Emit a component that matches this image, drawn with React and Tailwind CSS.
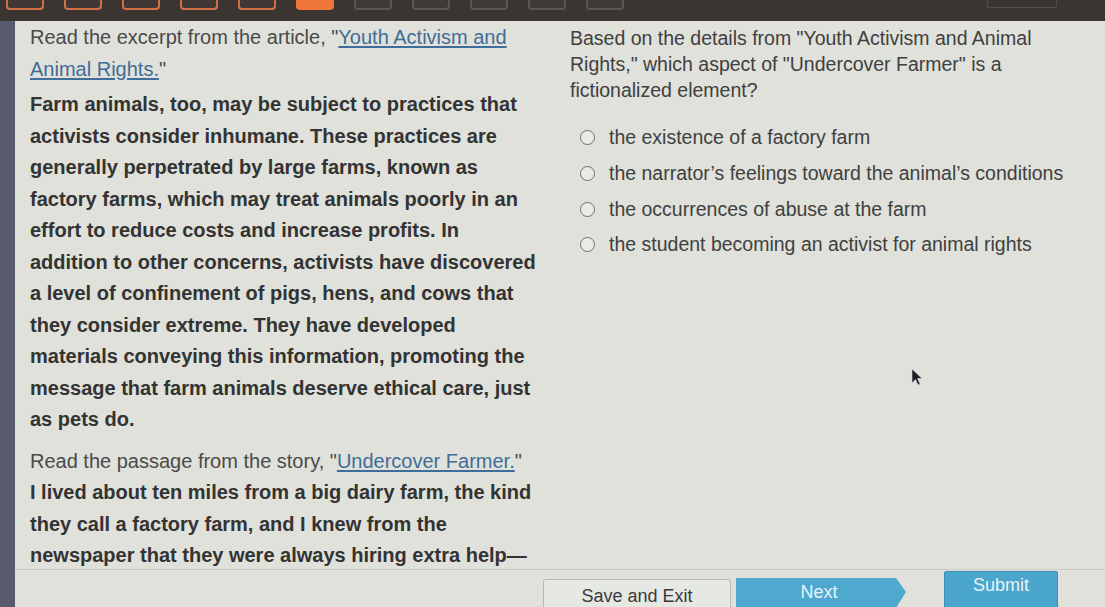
import { Fragment } from "react";

const tabs = [
  { state: "done" },
  { state: "done" },
  { state: "done" },
  { state: "done" },
  { state: "done" },
  { state: "current" },
  { state: "todo" },
  { state: "todo" },
  { state: "todo" },
  { state: "todo" },
  { state: "todo" },
];

const passageLines = [
  "Farm animals, too, may be subject to practices that",
  "activists consider inhumane. These practices are",
  "generally perpetrated by large farms, known as",
  "factory farms, which may treat animals poorly in an",
  "effort to reduce costs and increase profits. In",
  "addition to other concerns, activists have discovered",
  "a level of confinement of pigs, hens, and cows that",
  "they consider extreme. They have developed",
  "materials conveying this information, promoting the",
  "message that farm animals deserve ethical care, just",
  "as pets do.",
];

const storyLines = [
  "I lived about ten miles from a big dairy farm, the kind",
  "they call a factory farm, and I knew from the",
  "newspaper that they were always hiring extra help\u2014",
];

const options = [
  "the existence of a factory farm",
  "the narrator\u2019s feelings toward the animal\u2019s conditions",
  "the occurrences of abuse at the farm",
  "the student becoming an activist for animal rights",
];

function Lines({ lines }) {
  return lines.map((l, i) => (
    <Fragment key={i}>
      {l}
      {i < lines.length - 1 && <br />}
    </Fragment>
  ));
}

export default function App() {
  return (
    <div className="relative h-[607px] w-full overflow-hidden bg-[#3a3531] font-['Liberation_Sans',Arial,sans-serif]">
      {/* lesson progress tabs */}
      <div className="flex h-[21px] items-start gap-[20px] pl-[6px]">
        {tabs.map((t, i) => (
          <div
            key={i}
            className={`h-[10px] w-[38px] rounded-b-[4px] border-2 border-t-0 ${
              t.state === "current"
                ? "border-[#f0763a] bg-[#f0763a]"
                : t.state === "done"
                ? "border-[#d46f45] bg-[#3f3733]"
                : "border-[#5a5652] bg-[#3f3a36]"
            }`}
          />
        ))}
        <div className="ml-auto mr-[48px] h-[8px] w-[70px] rounded-b-[3px] border border-t-0 border-[#55504c]" />
      </div>

      <div className="flex h-[586px]">
        <div className="w-[15px] shrink-0 bg-[#575b6b]" />
        <div className="flex min-w-0 flex-1 flex-col bg-[#dfe1da]">
          <div className="flex min-h-0 flex-1">
            {/* reading column */}
            <div className="w-[545px] shrink-0 whitespace-nowrap pl-[15px] pt-[1px] text-[20px] leading-[31.5px] text-[#4a4a4a]">
              <p className="mb-[4px]">
                Read the excerpt from the article, "
                <span className="text-[#3f6d99] underline decoration-[#3f6d99] underline-offset-2">
                  Youth Activism and
                  <br />
                  Animal Rights.
                </span>
                "
              </p>
              <p className="mb-[10px] font-bold text-[#333333]">
                <Lines lines={passageLines} />
              </p>
              <p>
                Read the passage from the story, "
                <span className="text-[#3f6d99] underline decoration-[#3f6d99] underline-offset-2">
                  Undercover Farmer.
                </span>
                "
              </p>
              <p className="font-bold text-[#333333]">
                <Lines lines={storyLines} />
              </p>
            </div>

            {/* question column */}
            <div className="min-w-0 flex-1 whitespace-nowrap pl-[10px] pt-[4px] text-[19.5px] text-[#404040]">
              <p className="leading-[26px]">
                Based on the details from "Youth Activism and Animal
                <br />
                Rights," which aspect of "Undercover Farmer" is a
                <br />
                fictionalized element?
              </p>
              <div className="mt-[17px] flex flex-col">
                {options.map((o) => (
                  <label key={o} className="flex h-[35.7px] items-center gap-[14px] pl-[10px]">
                    <span className="h-[15px] w-[15px] shrink-0 rounded-full border-[1.5px] border-[#6f6f6f] bg-[#e9ebe5]" />
                    <span>{o}</span>
                  </label>
                ))}
              </div>
            </div>
          </div>

          {/* footer buttons */}
          <div className="flex h-[38px] shrink-0 items-start border-t border-[#c9cbc4] pl-[528px] text-[18px]">
            <button className="mt-[9px] h-[40px] w-[188px] rounded-[3px] border border-[#b5b7b2] bg-[#e6e8e3] pb-[6px] text-[#3a3a3a]">
              Save and Exit
            </button>
            <div className="ml-[5px] mt-[8px] flex h-[40px]">
              <button className="h-full w-[158px] bg-[#4fa9cf] pb-[12px] pl-[8px] text-[#e8f3f8]">Next</button>
              <svg width="12" height="40" viewBox="0 0 12 40" className="block">
                <path d="M0 0 L2 0 L12 14 L2 30 L0 30 Z" fill="#4fa9cf" />
              </svg>
            </div>
            <button className="ml-[38px] mt-[1px] h-[45px] w-[114px] rounded-[2px] border border-[#3d8cb3] bg-[#4aa6cd] pb-[19px] text-[#e8f3f8]">
              Submit
            </button>
          </div>
        </div>
      </div>

      {/* mouse pointer */}
      <svg className="absolute left-[911px] top-[368px]" width="14" height="20" viewBox="0 0 14 20">
        <path d="M1 1 L1 15 L4.5 11.5 L7 17 L9 16 L6.5 10.5 L11 10.5 Z" fill="#1f1f22" stroke="#cfd2e0" strokeWidth="0.6" />
      </svg>
    </div>
  );
}
